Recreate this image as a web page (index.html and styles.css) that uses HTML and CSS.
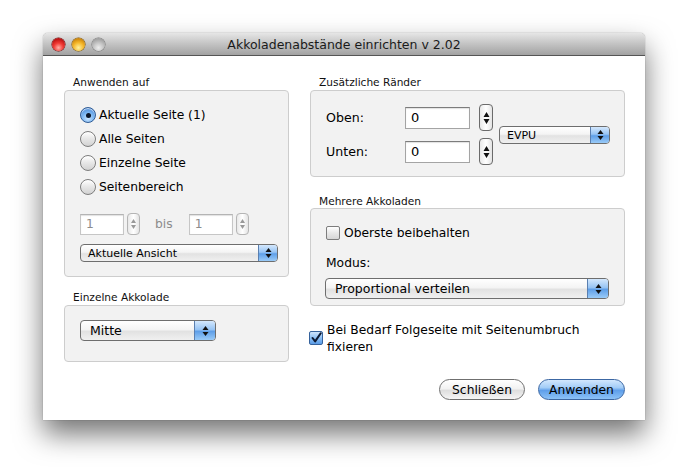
FILE: index.html
```html
<!DOCTYPE html>
<html lang="de">
<head>
<meta charset="utf-8">
<title>Akkoladenabstände einrichten</title>
<link rel="stylesheet" href="styles.css">
</head>
<body>
<div class="window">
  <div class="titlebar">
    <div class="lights">
      <span class="light red"></span>
      <span class="light yellow"></span>
      <span class="light grey"></span>
    </div>
    <div class="title">Akkoladenabstände einrichten v 2.02</div>
  </div>
  <div class="content">
    <div class="col left">
      <div class="glabel">Anwenden auf</div>
      <div class="gbox box-apply">
        <div class="radio-row"><span class="radio on"></span><span>Aktuelle Seite (1)</span></div>
        <div class="radio-row"><span class="radio"></span><span>Alle Seiten</span></div>
        <div class="radio-row"><span class="radio"></span><span>Einzelne Seite</span></div>
        <div class="radio-row"><span class="radio"></span><span>Seitenbereich</span></div>
        <div class="range-row">
          <span class="field small disabled">1</span>
          <span class="stepper small-step dis"><svg width="7" height="16" viewBox="0 0 7 16"><path d="M3.5 3 L6 7 H1Z M3.5 13 L6 9 H1Z" fill="#999"/></svg></span>
          <span class="bis">bis</span>
          <span class="field small disabled">1</span>
          <span class="stepper small-step dis"><svg width="7" height="16" viewBox="0 0 7 16"><path d="M3.5 3 L6 7 H1Z M3.5 13 L6 9 H1Z" fill="#999"/></svg></span>
        </div>
        <div class="popup mini w-view"><span class="ptext">Aktuelle Ansicht</span><span class="parrow"><svg width="7" height="12" viewBox="0 0 7 12"><path d="M3.5 1 L6.5 5 H0.5Z M3.5 11 L6.5 7 H0.5Z" fill="#111"/></svg></span></div>
      </div>
      <div class="glabel gap2">Einzelne Akkolade</div>
      <div class="gbox box-single">
        <div class="popup reg w-mitte"><span class="ptext">Mitte</span><span class="parrow"><svg width="7" height="14" viewBox="0 0 7 14"><path d="M3.5 2 L6.5 6 H0.5Z M3.5 12 L6.5 8 H0.5Z" fill="#111"/></svg></span></div>
      </div>
    </div>
    <div class="col right">
      <div class="glabel">Zusätzliche Ränder</div>
      <div class="gbox box-margins">
        <div class="mrows">
          <div class="mrow"><span class="mlabel">Oben:</span><span class="field big">0</span><span class="stepper big-step"><svg width="7" height="20" viewBox="0 0 7 20"><path d="M3.5 4 L6.5 9 H0.5Z M3.5 16 L6.5 11 H0.5Z" fill="#111"/></svg></span></div>
          <div class="mrow"><span class="mlabel">Unten:</span><span class="field big">0</span><span class="stepper big-step"><svg width="7" height="20" viewBox="0 0 7 20"><path d="M3.5 4 L6.5 9 H0.5Z M3.5 16 L6.5 11 H0.5Z" fill="#111"/></svg></span></div>
        </div>
        <div class="popup mini w-evpu"><span class="ptext">EVPU</span><span class="parrow"><svg width="7" height="12" viewBox="0 0 7 12"><path d="M3.5 1 L6.5 5 H0.5Z M3.5 11 L6.5 7 H0.5Z" fill="#111"/></svg></span></div>
      </div>
      <div class="glabel gap3">Mehrere Akkoladen</div>
      <div class="gbox box-multi">
        <div class="check-row"><span class="check"></span><span>Oberste beibehalten</span></div>
        <div class="modus">Modus:</div>
        <div class="popup reg w-prop"><span class="ptext">Proportional verteilen</span><span class="parrow"><svg width="7" height="14" viewBox="0 0 7 14"><path d="M3.5 2 L6.5 6 H0.5Z M3.5 12 L6.5 8 H0.5Z" fill="#111"/></svg></span></div>
      </div>
      <div class="fix-row">
        <span class="check on"><svg width="14" height="14" viewBox="0 0 14 14"><path d="M3 7 L6 11 L12.5 1.5" fill="none" stroke="#0d1a33" stroke-width="2.4" stroke-linecap="round" stroke-linejoin="round"/></svg></span>
        <span class="fix-text">Bei Bedarf Folgeseite mit Seitenumbruch<br>fixieren</span>
      </div>
      <div class="buttons">
        <span class="btn">Schließen</span>
        <span class="btn default">Anwenden</span>
      </div>
    </div>
  </div>
</div>
</body>
</html>
```

FILE: styles.css
```css
* { box-sizing: border-box; }
html, body { margin: 0; padding: 0; }
body {
  background: #ffffff;
  width: 690px;
  height: 468px;
  overflow: hidden;
  font-family: "DejaVu Sans", "Liberation Sans", sans-serif;
  font-size: 12.3px;
  color: #000;
}
.window {
  margin: 33px 0 0 43px;
  width: 602px;
  height: 387px;
  background: #fff;
  border-radius: 5px 5px 0 0;
  box-shadow: 0 14px 28px rgba(0,0,0,0.55), 0 0 1px rgba(0,0,0,0.6);
}
.titlebar {
  height: 23px;
  border-radius: 5px 5px 0 0;
  background: linear-gradient(#e6e6e6, #c6c6c6 45%, #a2a2a2);
  border-bottom: 1px solid #555;
  display: flex;
  align-items: center;
  position: relative;
}
.lights {
  display: flex;
  gap: 7px;
  padding-left: 9px;
  padding-top: 1px;
}
.light {
  width: 13px;
  height: 13px;
  border-radius: 50%;
  display: block;
}
.red { background: radial-gradient(circle at 50% 75%, #ffb0a8 0%, #f23b35 40%, #b50d0d 80%, #7e0606 100%); box-shadow: 0 0 0 0.5px #6c0b0b; }
.yellow { background: radial-gradient(circle at 50% 75%, #fff2a0 0%, #f5b629 45%, #c27a05 85%, #8a5400 100%); box-shadow: 0 0 0 0.5px #7b5404; }
.grey { background: radial-gradient(circle at 50% 75%, #eeeeee 0%, #c2c2c2 45%, #979797 85%, #7a7a7a 100%); box-shadow: 0 0 0 0.5px #777; }
.title {
  flex: 1;
  text-align: center;
  margin-left: -62px;
  font-size: 12.5px;
  color: #1a1a1a;
  padding-top: 1px;
}
.content {
  display: flex;
  gap: 21px;
  padding: 19px 0 0 21px;
}
.col { display: flex; flex-direction: column; }
.left { width: 225px; }
.right { width: 315px; }
.glabel {
  font-size: 10.6px;
  height: 14px;
  line-height: 14px;
  padding-left: 9px;
  margin-bottom: 1px;
  color: #111;
}
.gap2 { margin-top: 13px; }
.gap3 { margin-top: 17px; margin-bottom: 0; }
.gbox {
  background: #f2f2f2;
  border: 1px solid #cdcdcd;
  border-radius: 4px;
}
.box-apply { height: 187px; padding: 12px 0 0 15px; }
.radio-row {
  height: 24px;
  display: flex;
  align-items: center;
  gap: 3px;
}
.radio {
  width: 16px;
  height: 16px;
  border-radius: 50%;
  border: 1px solid #7d7d7d;
  background: linear-gradient(#ffffff, #e6e6e6 50%, #d2d2d2);
  box-shadow: inset 0 1px 1px rgba(255,255,255,0.8);
  display: inline-flex;
  align-items: center;
  justify-content: center;
}
.radio.on {
  border-color: #2f5c96;
  background: radial-gradient(circle at 50% 75%, #c8e4ff 0%, #7db7f2 45%, #3d7fd2 90%);
}
.radio.on::after {
  content: "";
  width: 5px;
  height: 5px;
  border-radius: 50%;
  background: #0c1628;
}
.range-row {
  margin-top: 14px;
  height: 22px;
  display: flex;
  align-items: center;
}
.field {
  background: #fff;
  border: 1px solid #a4a4a4;
  border-top-color: #7c7c7c;
  box-shadow: inset 0 1px 1px rgba(0,0,0,0.12);
  display: inline-flex;
  align-items: center;
}
.field.small { width: 44px; height: 21px; padding-left: 5px; }
.field.disabled { color: #8c8c8c; border-color: #c6c6c6; border-top-color: #b4b4b4; }
.stepper {
  display: inline-flex;
  align-items: center;
  justify-content: center;
  border: 1px solid #6b6b6b;
  border-radius: 4px;
  background: linear-gradient(90deg, #e8e8e8, #ffffff 50%, #e4e4e4);
}
.small-step { width: 13px; height: 22px; margin-left: 3px; }
.small-step.dis { border-color: #b5b5b5; }
.bis { margin-left: 15px; margin-right: 16px; color: #8c8c8c; }
.popup {
  display: flex;
  align-items: center;
  border: 1px solid #6e6e6e;
  border-radius: 4px;
  background: linear-gradient(#ffffff, #f4f4f4 45%, #e2e2e2 55%, #f0f0f0);
  overflow: hidden;
}
.popup .ptext { flex: 1; padding-left: 9px; }
.popup .parrow {
  width: 19px;
  align-self: stretch;
  display: flex;
  align-items: center;
  justify-content: center;
  border-left: 1px solid #5a7fb0;
  background: linear-gradient(#d4e8fd, #97c4f4 45%, #5f9fe8 55%, #9acbf8);
}
.popup.mini { height: 18px; font-size: 11px; }
.popup.mini .ptext { padding-left: 7px; }
.popup.reg { height: 21px; font-size: 12.5px; }
.popup.reg .parrow { width: 21px; }
.w-view { width: 198px; margin-top: 9px; }
.box-single { height: 57px; padding: 14px 0 0 15px; }
.w-mitte { width: 136px; }
.box-margins {
  height: 87px;
  padding: 13px 0 0 15px;
  display: flex;
  align-items: center;
}
.box-margins .mrows { align-self: flex-start; display: flex; flex-direction: column; gap: 7px; }
.mrow { display: flex; align-items: center; height: 27px; }
.mlabel { width: 79px; font-size: 12.6px; }
.field.big { width: 65px; height: 22px; padding-left: 5px; font-size: 13px; }
.big-step { width: 14px; height: 27px; margin-left: 9px; }
.w-evpu { width: 111px; margin-left: 6px; margin-top: -10px; }
.box-multi { height: 98px; padding: 15px 0 0 15px; }
.check-row { display: flex; align-items: center; gap: 4px; height: 18px; }
.check {
  width: 14px;
  height: 14px;
  border: 1px solid #7d7d7d;
  border-radius: 2px;
  background: linear-gradient(#ffffff, #e8e8e8 50%, #d6d6d6);
  display: inline-flex;
  align-items: center;
  justify-content: center;
  flex: none;
}
.modus { margin-top: 13px; height: 16px; line-height: 16px; }
.w-prop { width: 284px; margin-top: 7px; margin-left: -1px; }
.fix-row {
  margin-top: 16px;
  display: flex;
  gap: 4px;
  margin-left: -1px;
  line-height: 17px;
}
.check.on {
  margin-top: 9px;
  border-color: #35629c;
  background: linear-gradient(#cfe5fd, #8dc0f5 50%, #5a9be6);
}
.buttons {
  margin-top: 23px;
  display: flex;
  justify-content: flex-end;
  gap: 13px;
}
.btn {
  height: 21px;
  border-radius: 11px;
  border: 1px solid #6f6f6f;
  background: linear-gradient(#ffffff, #f2f2f2 45%, #dedede 55%, #f5f5f5);
  display: inline-flex;
  align-items: center;
  justify-content: center;
  width: 86px;
}
.btn.default {
  width: 87px;
  border-color: #3c67a3;
  background: linear-gradient(#d2e7fd, #a3cdf7 40%, #5f9fea 55%, #8cc2f7);
}
```
